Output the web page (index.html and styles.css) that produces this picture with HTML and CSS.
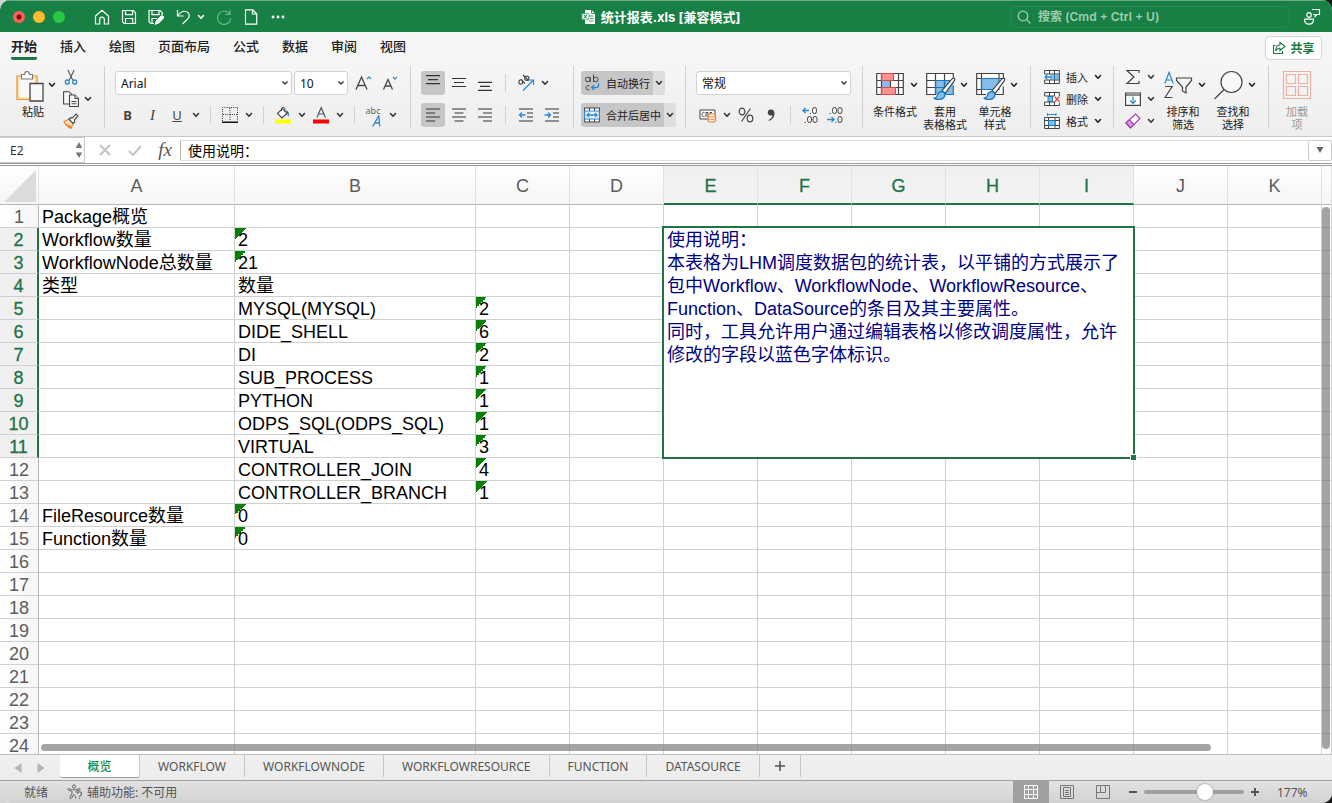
FILE: index.html
```html
<!DOCTYPE html>
<html lang="zh-CN">
<head>
<meta charset="utf-8">
<title>统计报表.xls</title>
<link rel="stylesheet" href="styles.css">
</head>
<body>
<svg class="defs" aria-hidden="true">
  <symbol id="chev" viewBox="0 0 8 8"><path d="M1.500 2.500 4 5.200 6.500 2.500" fill="none" stroke="currentColor" stroke-width="1.600" stroke-linecap="round" stroke-linejoin="round"/></symbol>
  <symbol id="brush" viewBox="0 0 30 30"><path d="M28.300 5.200c1 .8.2 2.300-.6 3.400L19 20.500l-3-2.800 9.500-11.300c1-.9 2-1.800 2.800-1.200Z" fill="#fff" stroke="#444" stroke-width="1.200"/><path d="M16 18.700c1.600.1 3 1.500 3 3-.4 2.800-2.500 4.800-6 4.800-1.600 0-3.600-.3-4.700-1.300 2.500-.5 2.600-1.500 3.200-3.300.6-1.900 2.300-3.300 4.500-3.200Z" fill="#83bdea" stroke="#1b75bc" stroke-width="1.200"/></symbol>
</svg>

<div class="window">
  <header class="titlebar">
    <div class="title-left">
      <div class="lights">
        <button class="light close" aria-label="关闭"></button>
        <button class="light minimize" aria-label="最小化"></button>
        <button class="light full" aria-label="全屏"></button>
      </div>
      <nav class="quick" aria-label="快速访问">
        <button aria-label="主页"><svg width="16" height="16" viewBox="0 0 16 16"><path d="M1.500 7 8 1.200 14.500 7v8h-4.200v-4.500a2.300 2.300 0 0 0-4.600 0V15H1.500Z"/></svg></button>
        <button aria-label="保存"><svg width="16" height="16" viewBox="0 0 16 16"><path d="M1.500 1.500h10.800l2.200 2.200v10.800H3.200l-1.700-1.700Zm3 0v4.200h7V1.500M4.500 14.500v-5h7.200v5"/></svg></button>
        <button aria-label="另存为"><svg width="16" height="16" viewBox="0 0 16 16"><path d="M6 14.500H2.700L1 12.800V1.500h11l2.200 2.200V6M4 1.500v4.200h7V1.500M4 14.500v-5h5"/><path d="m7.500 15 .8-3L13 7.300a1.400 1.400 0 0 1 2 2L10.500 14Z" fill="#fff"/></svg></button>
        <button class="undo" aria-label="撤消"><svg width="16" height="16" viewBox="0 0 16 16"><path d="M2.500 1v6h6M2.800 6.700C5 3.500 8.500 1.500 11.500 2.700c3.200 1.300 3.500 4.700 1.500 7L7.500 15"/></svg></button>
        <button class="narrow" aria-label="撤消选项"><svg width="8" height="8"><use href="#chev"/></svg></button>
        <button class="dim" aria-label="重做"><svg width="16" height="16" viewBox="0 0 16 16"><path d="M14 1v4.500H9.500M13.800 5.500A6.600 6.600 0 1 0 14.700 9"/></svg></button>
        <button aria-label="新建"><svg width="16" height="16" viewBox="0 0 16 16"><path d="M2.500.8h7.300l3.900 4v10.400H2.500ZM9.500 1v4h4"/></svg></button>
        <button aria-label="更多"><svg width="16" height="16" viewBox="0 0 16 16"><g fill="#fff" stroke="none"><circle cx="3" cy="8" r="1.400"/><circle cx="8" cy="8" r="1.400"/><circle cx="13" cy="8" r="1.400"/></g></svg></button>
      </nav>
    </div>
    <h1 class="doc-title"><svg width="16" height="16" viewBox="0 0 16 16"><path d="M4 1h6.500L14 4.500V15H4Z" fill="#fff"/><path d="M10.500 1v3.500H14M8 7h4.500M9 9.500h3.500M8 12h4.500" fill="none" stroke="#188045" stroke-width=".8"/><path d="M.8 4.500H8v6.200H.8Z" fill="#e6f3ea" stroke="#188045" stroke-width=".5"/><path d="m2.700 5.800 3.400 3.600M6.100 5.800 2.700 9.400" stroke="#188045"/></svg>统计报表.xls [兼容模式]</h1>
    <div class="title-right">
      <label class="search"><svg width="14" height="14" viewBox="0 0 14 14" fill="none" stroke="currentColor" stroke-width="1.300"><circle cx="6" cy="6" r="4.800"/><path d="m9.500 9.500 4 4"/></svg><input type="search" aria-label="搜索" placeholder="搜索 (Cmd + Ctrl + U)"></label>
      <button class="collab" aria-label="协作"><svg width="18" height="18" viewBox="0 0 18 18" fill="none" stroke="#fff" stroke-width="1.200"><path d="M9 1.500h7.500v5h-2.700L12.200 8.300V6.500H10"/><circle cx="6" cy="7" r="2.300"/><path d="M1.500 11.200h9c0 3-1.500 5-4.500 5s-4.500-2-4.500-5Z"/></svg></button>
    </div>
  </header>

  <div class="tabs-row">
    <nav class="tabs" aria-label="功能区">
      <a class="on" href="#">开始</a><a href="#">插入</a><a href="#">绘图</a><a href="#">页面布局</a><a href="#">公式</a><a href="#">数据</a><a href="#">审阅</a><a href="#">视图</a>
    </nav>
    <button class="share"><svg width="14" height="14" viewBox="0 0 14 14" fill="none" stroke="#1d7a45" stroke-width="1.100"><path d="M3.500 4.500H1.500v8h9V10M8 1.500l5 4-5 4V7.200C5.500 7 4.500 8.500 3.700 10 3.700 6.500 5 4 8 3.800Z"/></svg>共享</button>
  </div>

  <div class="ribbon">
    <section class="group clip">
      <button class="tall paste"><span class="tall-icon"><svg width="28" height="32" viewBox="0 0 28 32"><path d="M1 6h20v23.500H1Z" fill="#fde3a4" stroke="#e8913c" stroke-width="1.200"/><path d="M3.500 9h15v18h-15Z" fill="#f8f8f8"/><path d="M5.500 9V4.500h3C8.700 2.500 9.500 1.500 11 1.500s2.300 1 2.500 3h3V9Z" fill="#fff" stroke="#777" stroke-width="1.100"/><path d="M14 13.500h13V31H14Z" fill="#f8f8f8" stroke="#444" stroke-width="1.300"/></svg><svg class="ch" width="8" height="8"><use href="#chev"/></svg></span><span>粘贴</span></button>
      <div class="stack">
        <div class="line"><button class="ico" aria-label="剪切"><svg width="16" height="16" viewBox="0 0 16 16" fill="none"><path d="m4.800 1 5 10.200M11.200 1l-5 10.200" stroke="#555" stroke-width="1.100"/><circle cx="4.300" cy="13" r="2" stroke="#2b88d0" stroke-width="1.300"/><circle cx="11.700" cy="13" r="2" stroke="#2b88d0" stroke-width="1.300"/></svg></button></div>
        <div class="line"><button class="ico" aria-label="复制"><svg width="16" height="16" viewBox="0 0 16 16" fill="#f8f8f8" stroke="#444" stroke-width="1.100"><path d="M6 13H.6V.7H6l3 3"/><path d="M6.500 4H12l3.400 3.400v8.200H6.500Z"/><path d="M12 4v3.500h3.400M8.500 10.500h5M8.500 12.800h5"/></svg></button><button class="drop" aria-label="复制选项"><svg width="8" height="8"><use href="#chev"/></svg></button></div>
        <div class="line"><button class="ico" aria-label="格式刷"><svg width="16" height="16" viewBox="0 0 16 16"><path d="m1 8.500 5-2.300 4.200 4.200L8 15.300C4.800 14 2.500 12 1 8.500Z" fill="#fce0b8" stroke="#ea8a3a" stroke-width="1.300"/><path d="m2.500 10.500 6 2.500L8 15.300 4 13Z" fill="#ea8a3a"/><path d="m6 6.200 1.500-1.600 2 .3L13 1l2 2-3.600 3.800.3 2-1.500 1.600Z" fill="#fff" stroke="#444" stroke-width="1.100"/></svg></button></div>
      </div>
    </section>

    <section class="group two font-group">
      <div class="row"><select class="box font" aria-label="字体"><option>Arial</option></select><select class="box size" aria-label="字号"><option>10</option></select>
        <button class="ico wide" aria-label="增大字号"><svg width="18" height="18" viewBox="0 0 18 18" fill="none"><path d="M1 15.500 6.500 3 12 15.500M3 11.500h7" stroke="#444" stroke-width="1.300"/><path d="m12 5 2-2.200 2 2.200" stroke="#2b88d0" stroke-width="1.200"/></svg></button><button class="ico wide" aria-label="减小字号"><svg width="18" height="18" viewBox="0 0 18 18" fill="none"><path d="m1.500 15.500 4.500-10 4.500 10M3 12h6" stroke="#444" stroke-width="1.300"/><path d="m11 2.800 2 2.200 2-2.200" stroke="#2b88d0" stroke-width="1.200"/></svg></button></div>
      <div class="row"><button class="ico bi"><b>B</b></button><button class="ico bi"><i>I</i></button><button class="ico"><u>U</u></button><button class="drop" aria-label="下划线选项"><svg width="8" height="8"><use href="#chev"/></svg></button><span class="sep"></span>
        <button class="ico" aria-label="边框"><svg width="16" height="16" viewBox="0 0 16 16" fill="none" stroke="#333"><path d="M.5 14V.5h15V14M8 1v13M1 7.500h14" stroke-dasharray="1 1.200"/><path d="M0 15.300h16" stroke="#111" stroke-width="1.400"/></svg></button><button class="drop" aria-label="边框选项"><svg width="8" height="8"><use href="#chev"/></svg></button><span class="sep"></span>
        <button class="ico" aria-label="填充颜色"><svg width="16" height="18" viewBox="0 0 16 18"><path d="m2.500 7.500 5-5 4.500 5-5 4.500Z" fill="#fff" stroke="#444" stroke-width="1.100"/><path d="M6.500 5V2.500a1.700 1.700 0 0 1 3.300 0V6" fill="none" stroke="#444"/><path d="M11 4.500c3 .3 3.500 3.500 2.300 6.500l-1-3Z" fill="#1b6fb8"/><path d="M0 13.500h16v4H0Z" fill="#ff0"/></svg></button><button class="drop" aria-label="填充颜色选项"><svg width="8" height="8"><use href="#chev"/></svg></button>
        <button class="ico" aria-label="字体颜色"><svg width="16" height="18" viewBox="0 0 16 18"><path d="m4 11.500 4.200-10 4.200 10M5.500 8h5.500" fill="none" stroke="#555" stroke-width="1.200"/><path d="M0 13.500h16v4H0Z" fill="red"/></svg></button><button class="drop" aria-label="字体颜色选项"><svg width="8" height="8"><use href="#chev"/></svg></button><span class="sep"></span>
        <button class="ico" aria-label="拼音指南"><span class="abc">abc</span><svg width="10" height="12" viewBox="0 0 10 12"><path d="M.7 11.500 6.800.8l1 10.700M2.800 8h4.700" fill="none" stroke="#2b88d0" stroke-width="1.300"/></svg></button><button class="drop" aria-label="拼音选项"><svg width="8" height="8"><use href="#chev"/></svg></button></div>
    </section>

    <section class="group two">
      <div class="row gap"><button class="ico on" aria-label="顶端对齐"><svg width="16" height="16" viewBox="0 0 16 16" stroke="#333" stroke-width="1.200"><path d="M1 .6h14M3 4.600h10M1 8.600h14"/></svg></button><button class="ico" aria-label="垂直居中"><svg width="16" height="16" viewBox="0 0 16 16" stroke="#333" stroke-width="1.200"><path d="M1 3.500h14M3 7.500h10M1 11.500h14"/></svg></button><button class="ico" aria-label="底端对齐"><svg width="16" height="16" viewBox="0 0 16 16" stroke="#333" stroke-width="1.200"><path d="M1 7.400h14M3 11.400h10M1 15.400h14"/></svg></button><span class="sep"></span>
        <span class="pair"><button class="ico" aria-label="方向"><svg width="18" height="18" viewBox="0 0 18 18" fill="none"><g stroke="#444" stroke-width="1.100"><ellipse cx="3.800" cy="8" rx="1.900" ry="2.200"/><path d="m4 5.500 4 4"/><path d="m6 1 5.500 5.500"/><ellipse cx="9.800" cy="4.200" rx="2.100" ry="2.200"/></g><path d="M6 16.500 16 6.500M11.500 6H16.500v5" stroke="#2b88d0" stroke-width="1.200"/></svg></button><button class="drop" aria-label="方向选项"><svg width="8" height="8"><use href="#chev"/></svg></button></span></div>
      <div class="row gap"><button class="ico on" aria-label="左对齐"><svg width="16" height="16" viewBox="0 0 16 16" stroke="#333" stroke-width="1.200"><path d="M1 2h14M1 6h9M1 10h14M1 14h9"/></svg></button><button class="ico" aria-label="居中"><svg width="16" height="16" viewBox="0 0 16 16" stroke="#333" stroke-width="1.200"><path d="M1 2h14M3.500 6h9M1 10h14M3.500 14h9"/></svg></button><button class="ico" aria-label="右对齐"><svg width="16" height="16" viewBox="0 0 16 16" stroke="#333" stroke-width="1.200"><path d="M1 2h14M6 6h9M1 10h14M6 14h9"/></svg></button><span class="sep"></span>
        <button class="ico" aria-label="减少缩进"><svg width="16" height="16" viewBox="0 0 16 16" fill="none" stroke="#333" stroke-width="1.200"><path d="M1 2h14M9 6h6M9 10h6M1 14h14"/><path d="M7.500 8H1.500M4 5.500 1.500 8 4 10.500" stroke="#2b88d0" stroke-width="1.400"/></svg></button><button class="ico" aria-label="增加缩进"><svg width="16" height="16" viewBox="0 0 16 16" fill="none" stroke="#333" stroke-width="1.200"><path d="M1 2h14M9 6h6M9 10h6M1 14h14"/><path d="M.5 8h6M4 5.500 6.500 8 4 10.500" stroke="#2b88d0" stroke-width="1.400"/></svg></button></div>
    </section>

    <section class="group two wraps">
      <div class="row"><button class="toggle"><svg width="16" height="18" viewBox="0 0 16 18" fill="none" stroke="#444"><ellipse cx="3.800" cy="5.500" rx="2.300" ry="2.400"/><path d="M6.200 3v5M9.500.5V8"/><ellipse cx="11.800" cy="5.500" rx="2.300" ry="2.400"/><path d="M5.500 12a2.200 2.200 0 1 0 0 3.500"/><path d="M14.500 9v2.500a2 2 0 0 1-2 2H7.500M10 11l-2.500 2.500L10 16" stroke="#2b88d0" stroke-width="1.300"/></svg>自动换行</button><button class="toggle-drop" aria-label="换行选项"><svg width="8" height="8"><use href="#chev"/></svg></button></div>
      <div class="row"><button class="toggle"><svg width="16" height="16" viewBox="0 0 16 16" fill="#fff" stroke="#444"><path d="M.5 1h15v14H.5ZM5.500 1v3M10.500 1v3M5.500 12v3M10.500 12v3"/><path d="M.7 4h14.600v8H.7Z" fill="#e5f2fb" stroke="#2b88d0"/><path d="M3 8h10M5 6 3 8l2 2M11 6l2 2-2 2" fill="none" stroke="#2b88d0" stroke-width="1.300"/></svg>合并后居中</button><button class="toggle-drop" aria-label="合并选项"><svg width="8" height="8"><use href="#chev"/></svg></button></div>
    </section>

    <section class="group two number">
      <div class="row"><select class="box format" aria-label="数字格式"><option>常规</option></select></div>
      <div class="row"><button class="ico" aria-label="货币格式"><svg width="18" height="16" viewBox="0 0 18 16" fill="none"><path d="M1 3h15v9H1Z" fill="#fff" stroke="#444"/><path d="M5.500 5.500C4 4.800 3 6 3 7.500S4 10 5.500 9.500M7 10V5.500h2V10M11 9V5.500h2" stroke="#444"/><path d="M9 8.500v5c0 2 7.500 2 7.500 0v-5" fill="#fff" stroke="#ee8433" stroke-width="1.200"/><ellipse cx="12.750" cy="8.500" rx="3.750" ry="1.500" fill="#fff" stroke="#ee8433" stroke-width="1.200"/><path d="M9 11c0 2 7.500 2 7.500 0" stroke="#ee8433"/></svg></button><button class="drop" aria-label="货币选项"><svg width="8" height="8"><use href="#chev"/></svg></button>
        <button class="ico" aria-label="百分比"><svg width="16" height="16" viewBox="0 0 16 16" fill="none" stroke="#444" stroke-width="1.200"><ellipse cx="4" cy="4.500" rx="2.800" ry="3.300"/><ellipse cx="12" cy="11.500" rx="2.800" ry="3.300"/><path d="M12.500 1.500 3.500 14.500"/></svg></button><button class="ico bi" aria-label="千位分隔"><svg width="10" height="14" viewBox="0 0 10 14"><path d="M5 1.500a3 3 0 0 0-.5 6c.8.200 1.500 0 2-.3C6.300 9.500 4.500 11.200 2.500 12l.5 1C6.500 11.800 8.500 9 8.500 5.500 8.500 3 7 1.500 5 1.500Z" fill="#444"/></svg></button><span class="sep"></span>
        <button class="ico" aria-label="增加小数位"><svg width="18" height="18" viewBox="0 0 18 18" fill="none" stroke="#444"><path d="M8 4.500H2M4.500 2 2 4.500 4.500 7" stroke="#2b88d0" stroke-width="1.400"/><rect x="11.500" y="1.500" width="4" height="6" rx="2"/><rect x="6.500" y="10.500" width="4" height="6" rx="2"/><rect x="12" y="10.500" width="4" height="6" rx="2"/><path d="M3.500 16.500h1.200M9 7.500h1"/></svg></button><button class="ico bi" aria-label="减少小数位"><svg width="18" height="18" viewBox="0 0 18 18" fill="none" stroke="#444"><path d="M1 13.500h7M5.500 11 8 13.500 5.500 16" stroke="#2b88d0" stroke-width="1.400"/><rect x="6.500" y="1.500" width="4" height="6" rx="2"/><rect x="12" y="1.500" width="4" height="6" rx="2"/><rect x="12" y="10.500" width="4" height="6" rx="2"/><path d="M3.500 7.500h1.200M9.500 16.500h1"/></svg></button></div>
    </section>

    <section class="group tiles">
      <button class="tall"><span class="tall-icon"><svg width="30" height="30" viewBox="0 0 30 30" fill="none"><path d="M.7 3.500h26.600v21H.7Z" fill="#fff"/><path d="M5.500 3.500h12v7h-12ZM5.500 17.500h14v7h-14Z" fill="#ff9191"/><path d="M5.500 10.500h9v7h-9Z" fill="#83bdea"/><path d="M.7 3.500h26.600v21H.7ZM.7 10.500h26.600M.7 17.500h26.600M22.500 3.500v21M14.500 10.500v7M5.500 3.500v21" stroke="#444" stroke-width="1.200"/><path d="M17.500 10.500h-12v-7h12v7M5.500 17.500h14v7h-14Z" stroke="#e2474b" stroke-width="1.200"/></svg><svg class="ch" width="8" height="8"><use href="#chev"/></svg></span><span>条件格式</span></button>
      <button class="tall"><span class="tall-icon"><svg width="30" height="30" viewBox="0 0 30 30" fill="none"><path d="M.7 3.500h26.600v21H.7Z" fill="#fff"/><path d="M9.500 10.500h17.800v14H9.500Z" fill="#83bdea"/><path d="M27.300 9V3.500H.7v21H10M.7 10.500h26.600M.7 17.500H19M9.500 3.500v21M18.500 3.500v14" stroke="#444" stroke-width="1.200"/><path d="M9.500 24.500v-14h17M9.500 17.500H18M18.500 10.500v7M19 24.500h8.300v-9" stroke="#1b75bc" stroke-width="1.200"/><use href="#brush" width="30" height="30" y="3"/></svg><svg class="ch" width="8" height="8"><use href="#chev"/></svg></span><span>套用<br>表格格式</span></button>
      <button class="tall"><span class="tall-icon"><svg width="30" height="30" viewBox="0 0 30 30" fill="none"><path d="M.7 3.500h26.600v21H.7Z" fill="#fff"/><path d="M27.300 9V3.500H.7v21H10M.7 8.500h26.600M.7 19.500H10M5.500 3.500v21M23 3.500v5M19 24.500h8.300v-8" stroke="#444" stroke-width="1.200"/><path d="M5.500 8.500H23v11H5.500Z" fill="#83bdea" stroke="#1b75bc" stroke-width="1.200"/><use href="#brush" width="30" height="30" y="3"/></svg><svg class="ch" width="8" height="8"><use href="#chev"/></svg></span><span>单元格<br>样式</span></button>
    </section>

    <section class="group cells">
      <div class="stack">
        <button class="line"><svg width="16" height="16" viewBox="0 0 16 16" fill="none"><path d="M.6 1.500h14.800v13H.6Z" fill="#fff"/><path d="M6 5.500h9.400v5H6Z" fill="#83bdea"/><path d="M.6 5V1.500h14.800v13H.6V11M.6 5h14.800M.6 11h14.800M5.500 1.500V5M10.500 1.500V5M5.500 11v3.500M10.500 11v3.500" stroke="#444"/><path d="M10.500 5.500v5" stroke="#1b75bc"/><path d="M7.500 8H1M3.500 5.500 1 8l2.500 2.500" stroke="#2b88d0" stroke-width="1.300"/></svg><span>插入</span><svg class="ch" width="8" height="8"><use href="#chev"/></svg></button>
        <button class="line"><svg width="16" height="16" viewBox="0 0 16 16" fill="none"><path d="M.6 1.500h14.800v13H.6Z" fill="#fff"/><path d="M.6 5V1.500h14.800V5M.6 11v3.500h14.800V12M.6 5H10M.6 11H10M5.500 1.500V5M10.500 1.500V5M5.500 11v3.500M10.500 11v3.500" stroke="#444"/><path d="M4 5.500h4.500v5H4Z" fill="#83bdea" stroke="#1b75bc"/><path d="m10.500 5.500 5 5.500M15.500 5.500l-5 5.500" stroke="#e2474b" stroke-width="1.300"/></svg><span>删除</span><svg class="ch" width="8" height="8"><use href="#chev"/></svg></button>
        <button class="line"><svg width="16" height="16" viewBox="0 0 16 16" fill="none"><path d="M.6 4.500h14.800v11H.6Z" fill="#fff" stroke="#444"/><path d="M.6 7.500h14.800M.6 12.500h14.800M4.500 4.500v11M11 4.500v11" stroke="#444"/><path d="M4.500 7.500H11v5H4.500Z" fill="#83bdea" stroke="#1b75bc"/><path d="M3.500 1.500H12M3.500 0v3M12 0v3" stroke="#2b88d0"/></svg><span>格式</span><svg class="ch" width="8" height="8"><use href="#chev"/></svg></button>
      </div>
    </section>

    <section class="group edit">
      <div class="stack">
        <div class="line"><button class="ico" aria-label="自动求和"><svg width="16" height="16" viewBox="0 0 16 16" fill="none"><path d="M14 4V1.500H2L9 8l-7 6.500h12V12" stroke="#444" stroke-width="1.200"/></svg></button><button class="drop" aria-label="求和选项"><svg width="8" height="8"><use href="#chev"/></svg></button></div>
        <div class="line"><button class="ico" aria-label="填充"><svg width="16" height="16" viewBox="0 0 16 16" fill="none"><path d="M.6 2h14.800v12.400H.6Z" fill="#fff" stroke="#444" stroke-width="1.200"/><path d="M.6 4h14.800" stroke="#444" stroke-width="1.200"/><path d="M8 5.500v7M5 9.500l3 3 3-3" stroke="#2b88d0" stroke-width="1.200"/></svg></button><button class="drop" aria-label="填充选项"><svg width="8" height="8"><use href="#chev"/></svg></button></div>
        <div class="line"><button class="ico" aria-label="清除"><svg width="16" height="16" viewBox="0 0 16 16"><path d="m1 10 9.500-9L15 5.500 5.500 15Z" fill="#fff" stroke="#a33fb0" stroke-width="1.200"/><path d="m1 10 3.300-3.200L9 11.500 5.500 15Z" fill="#d698dc" stroke="#a33fb0" stroke-width="1.200"/></svg></button><button class="drop" aria-label="清除选项"><svg width="8" height="8"><use href="#chev"/></svg></button></div>
      </div>
      <button class="tall"><span class="tall-icon"><svg width="30" height="30" viewBox="0 0 30 30" fill="none"><path d="M.8 13.500 5 2.500l4.200 11M2.300 10h5.400" stroke="#2b88d0" stroke-width="1.200"/><path d="M1.200 16.500h7L1 27.500h7.500M12.500 8h15v2.500L22 17v6l-3.500-2v-4l-6-6.500Z" stroke="#444" stroke-width="1.200"/></svg><svg class="ch" width="8" height="8"><use href="#chev"/></svg></span><span>排序和<br>筛选</span></button>
      <button class="tall"><span class="tall-icon"><svg width="30" height="30" viewBox="0 0 30 30" fill="#f8f8f8" stroke="#444" stroke-width="1.200"><circle cx="17.500" cy="12" r="10.500"/><path d="M10 19.500.5 29"/></svg><svg class="ch" width="8" height="8"><use href="#chev"/></svg></span><span>查找和<br>选择</span></button>
    </section>

    <section class="group last">
      <button class="tall addin" disabled><span class="tall-icon"><svg width="30" height="30" viewBox="0 0 30 30" fill="none" stroke="#eeb09f" stroke-width="1.200"><path d="M1.500 1.500h27v27h-27ZM4.500 4.500h9v9h-9ZM16.500 4.500h9v9h-9ZM4.500 16.500h9v9h-9ZM16.500 16.500h9v9h-9Z"/></svg></span><span>加载<br>项</span></button>
    </section>
  </div>

  <div class="formula-row">
    <div class="namebox"><input type="text" value="E2" aria-label="名称框"><svg width="8" height="18" viewBox="0 0 8 18" fill="#777"><path d="m4 1 3.300 6H.7ZM4 17 .7 11.500h6.600Z"/></svg></div>
    <div class="fx">
      <button aria-label="取消"><svg width="14" height="14" viewBox="0 0 14 14" stroke="#c4c4c4" stroke-width="2"><path d="m2 2 10 10M12 2 2 12"/></svg></button>
      <button aria-label="输入"><svg width="14" height="14" viewBox="0 0 14 14" fill="none" stroke="#c4c4c4" stroke-width="2"><path d="m1 8 4 4 8-9"/></svg></button>
      <button class="fn" aria-label="插入函数"><i>fx</i></button>
    </div>
    <input class="formula" type="text" value="使用说明：" aria-label="编辑栏">
    <button class="expand" aria-label="展开编辑栏"><svg width="8" height="8" viewBox="0 0 8 8"><path d="M.5 1h7L4 7Z" fill="#666"/></svg></button>
  </div>

  <main class="sheet">
    <table class="cells-table">
      <colgroup><col class="c-row"><col class="c-a"><col class="c-b"><col class="c"><col class="c"><col class="c"><col class="c"><col class="c"><col class="c"><col class="c"><col class="c"><col class="c"><col></colgroup>
      <thead><tr><th class="corner"><svg width="32" height="32" viewBox="0 0 32 32"><path d="M32 0v32H0Z" fill="#dcdcdc"/></svg></th><th>A</th><th>B</th><th>C</th><th>D</th><th class="sel">E</th><th class="sel">F</th><th class="sel">G</th><th class="sel">H</th><th class="sel">I</th><th>J</th><th>K</th><th></th></tr></thead>
      <tbody>
      <tr><th>1</th><td>Package概览</td><td></td><td></td><td></td><td></td><td></td><td></td><td></td><td></td><td></td><td></td><td></td></tr>
      <tr><th class="sel">2</th><td>Workflow数量</td><td class="flag">2</td><td></td><td></td><td class="merged" colspan="5" rowspan="10">使用说明：<br>本表格为LHM调度数据包的统计表，以平铺的方式展示了包中Workflow、WorkflowNode、WorkflowResource、Function、DataSource的条目及其主要属性。<br>同时，工具允许用户通过编辑表格以修改调度属性，允许修改的字段以蓝色字体标识。<span class="handle"></span></td><td></td><td></td><td></td></tr>
      <tr><th class="sel">3</th><td>WorkflowNode总数量</td><td class="flag">21</td><td></td><td></td><td></td><td></td><td></td></tr>
      <tr><th class="sel">4</th><td>类型</td><td>数量</td><td></td><td></td><td></td><td></td><td></td></tr>
      <tr><th class="sel">5</th><td></td><td>MYSQL(MYSQL)</td><td class="flag">2</td><td></td><td></td><td></td><td></td></tr>
      <tr><th class="sel">6</th><td></td><td>DIDE_SHELL</td><td class="flag">6</td><td></td><td></td><td></td><td></td></tr>
      <tr><th class="sel">7</th><td></td><td>DI</td><td class="flag">2</td><td></td><td></td><td></td><td></td></tr>
      <tr><th class="sel">8</th><td></td><td>SUB_PROCESS</td><td class="flag">1</td><td></td><td></td><td></td><td></td></tr>
      <tr><th class="sel">9</th><td></td><td>PYTHON</td><td class="flag">1</td><td></td><td></td><td></td><td></td></tr>
      <tr><th class="sel">10</th><td></td><td>ODPS_SQL(ODPS_SQL)</td><td class="flag">1</td><td></td><td></td><td></td><td></td></tr>
      <tr><th class="sel">11</th><td></td><td>VIRTUAL</td><td class="flag">3</td><td></td><td></td><td></td><td></td></tr>
      <tr><th>12</th><td></td><td>CONTROLLER_JOIN</td><td class="flag">4</td><td></td><td></td><td></td><td></td><td></td><td></td><td></td><td></td><td></td></tr>
      <tr><th>13</th><td></td><td>CONTROLLER_BRANCH</td><td class="flag">1</td><td></td><td></td><td></td><td></td><td></td><td></td><td></td><td></td><td></td></tr>
      <tr><th>14</th><td>FileResource数量</td><td class="flag">0</td><td></td><td></td><td></td><td></td><td></td><td></td><td></td><td></td><td></td><td></td></tr>
      <tr><th>15</th><td>Function数量</td><td class="flag">0</td><td></td><td></td><td></td><td></td><td></td><td></td><td></td><td></td><td></td><td></td></tr>
      <tr><th>16</th><td></td><td></td><td></td><td></td><td></td><td></td><td></td><td></td><td></td><td></td><td></td><td></td></tr>
      <tr><th>17</th><td></td><td></td><td></td><td></td><td></td><td></td><td></td><td></td><td></td><td></td><td></td><td></td></tr>
      <tr><th>18</th><td></td><td></td><td></td><td></td><td></td><td></td><td></td><td></td><td></td><td></td><td></td><td></td></tr>
      <tr><th>19</th><td></td><td></td><td></td><td></td><td></td><td></td><td></td><td></td><td></td><td></td><td></td><td></td></tr>
      <tr><th>20</th><td></td><td></td><td></td><td></td><td></td><td></td><td></td><td></td><td></td><td></td><td></td><td></td></tr>
      <tr><th>21</th><td></td><td></td><td></td><td></td><td></td><td></td><td></td><td></td><td></td><td></td><td></td><td></td></tr>
      <tr><th>22</th><td></td><td></td><td></td><td></td><td></td><td></td><td></td><td></td><td></td><td></td><td></td><td></td></tr>
      <tr><th>23</th><td></td><td></td><td></td><td></td><td></td><td></td><td></td><td></td><td></td><td></td><td></td><td></td></tr>
      <tr><th>24</th><td></td><td></td><td></td><td></td><td></td><td></td><td></td><td></td><td></td><td></td><td></td><td></td></tr>
      </tbody>
    </table>
    <div class="scroll-v"></div>
    <div class="scroll-h"></div>
  </main>

  <nav class="sheets" aria-label="工作表">
    <div class="arrows"><button aria-label="上一张"><svg width="8" height="12" viewBox="0 0 8 12"><path d="M7.500 1v10L.5 6Z" fill="#b4b4b4"/></svg></button><button aria-label="下一张"><svg width="8" height="12" viewBox="0 0 8 12"><path d="M.5 1v10l7-5Z" fill="#b4b4b4"/></svg></button></div>
    <button class="sheet-tab on">概览</button><button class="sheet-tab">WORKFLOW</button><button class="sheet-tab">WORKFLOWNODE</button><button class="sheet-tab">WORKFLOWRESOURCE</button><button class="sheet-tab">FUNCTION</button><button class="sheet-tab">DATASOURCE</button><button class="sheet-tab add" aria-label="新建工作表"><svg width="12" height="12" viewBox="0 0 12 12" stroke="#555" stroke-width="1.600"><path d="M6 1v10M1 6h10"/></svg></button>
  </nav>

  <footer class="status">
    <span>就绪</span>
    <span class="a11y"><svg width="16" height="16" viewBox="0 0 16 16" fill="none" stroke="#666"><circle cx="7" cy="2.500" r="1.600"/><path d="M1.500 4.500C3.500 5.500 5 5.800 7 5.800s3.500-.3 5.500-1.300c1 0 1 1.200.3 1.500L9 7.300v1.500M1.500 4.500c-1 .2-.8 1.300 0 1.600L5 7.300v2L3 13.500c-.2 1.200 1 1.500 1.500.7L7 10M8 11.500l.8 3"/><path d="M10.500 9.800a2 2 0 1 1 3 1.700c-.7.4-1 .8-1 1.500M12.500 14v1" stroke-width="1.200"/></svg>辅助功能: 不可用</span>
    <div class="views">
      <button class="on" aria-label="普通"><svg width="14" height="14" viewBox="0 0 14 14" fill="none" stroke="#fff"><path d="M.5.500h13v13H.5ZM4.500.500v13M9.500.500v13M.5 4.500h13M.5 9.500h13"/></svg></button>
      <button aria-label="页面布局"><svg width="14" height="14" viewBox="0 0 14 14" fill="none" stroke="#777"><path d="M.5.500h13v13H.5ZM3.500 2.500h7v9h-7ZM5 5.500h4M5 7.500h4M5 9.500h4"/></svg></button>
      <button aria-label="分页预览"><svg width="14" height="14" viewBox="0 0 14 14" fill="none" stroke="#777"><path d="M.5.500h13v13H.5ZM4.500.500v7M9.500.500v7H.5"/></svg></button>
    </div>
    <div class="zoom"><button aria-label="缩小"><svg width="8" height="8" viewBox="0 0 8 8"><path d="M0 4h8" stroke="#555" stroke-width="2"/></svg></button><input type="range" min="0" max="100" value="63" aria-label="缩放"><button aria-label="放大"><svg width="8" height="8" viewBox="0 0 8 8"><path d="M0 4h8M4 0v8" stroke="#555" stroke-width="2"/></svg></button></div>
    <span class="percent">177%</span>
  </footer>
</div>
</body>
</html>
```
FILE: styles.css
```css
* { box-sizing: border-box; }
html { background: linear-gradient(to right, #d5d5d5, #1a1a1a); }
body { margin: 0; font-family: "Noto Sans", "Noto Sans CJK SC", sans-serif; font-size: 12px; color: #333; }
button, input, select { font: inherit; color: inherit; border: 0; background: none; padding: 0; margin: 0; }
button { display: flex; align-items: center; justify-content: center; }
svg { display: block; flex: none; }
.defs { width: 0; height: 0; position: absolute; }
.window { height: 100vh; display: flex; flex-direction: column; overflow: hidden; border-radius: 10px; background: #f3f3f3; }
.window > * { flex: none; }

/* title bar */
.titlebar { height: 32px; display: flex; align-items: center; background: #188045; color: #fff; border-top: 1px solid #6fa886; }
.title-left, .title-right { flex: 1; display: flex; align-items: center; }
.lights { display: flex; gap: 8px; padding: 0 29px 0 13px; }
.light { width: 12px; height: 12px; border-radius: 50%; }
.close { background: radial-gradient(circle, #7a0c06 0 2px, #ff5f57 3px); }
.minimize { background: #febc2e; }
.full { background: #28c840; }
.quick { display: flex; align-items: center; gap: 11px; }
.quick svg { fill: none; stroke: #fff; stroke-width: 1.2; }
.quick .narrow { width: 8px; }
.quick .undo { margin-right: -5px; }
.dim { opacity: .4; }
.doc-title { margin: 0; display: flex; align-items: center; gap: 4px; font: bold 13px/20px Inter, "Noto Sans CJK SC", sans-serif; }
.title-right { justify-content: flex-end; gap: 13px; padding-right: 11px; }
.search { width: 280px; height: 22px; display: flex; align-items: center; gap: 7px; padding: 0 6px; border: 1px solid #2a8a54; border-radius: 6px; color: #a3ccb3; }
.search input { flex: 1; min-width: 0; outline: 0; font: 600 12px/20px Inter, "Noto Sans CJK SC", sans-serif; }
.search input::placeholder { color: #a3ccb3; }

/* ribbon tabs */
.tabs-row { height: 34px; display: flex; align-items: center; justify-content: space-between; padding: 0 10px 2px 11px; background: #f5f5f5; }
.tabs { display: flex; gap: 23px; align-self: stretch; }
.tabs a { font-size: 13px; font-weight: 500; line-height: 24px; color: #222; text-decoration: none; padding-top: 2px; height: 28px; }
.tabs .on { font-weight: 700; border-bottom: 3px solid #217346; border-radius: 2px; }
.share { width: 57px; height: 24px; gap: 4px; background: #fff; border: 1px solid #d4d4d4; border-radius: 4px; color: #1d7a45; font-weight: 700; }

/* ribbon */
.ribbon { height: 71px; display: flex; align-items: flex-start; background: linear-gradient(#f5f5f5, #eee); border-bottom: 1px solid #c8c8c8; }
.group { height: 62px; flex: none; display: flex; border-right: 1px solid #d0d0d0; }
.group.last { border: 0; }
.clip { width: 105px; padding-left: 10px; }
.clip .stack { padding-left: 3px; }
.two { flex-direction: column; gap: 8px; padding: 5px 9px 0 10px; }
.font-group { padding-right: 6px; }
.row { display: flex; align-items: center; height: 24px; }
.row.gap { gap: 2px; }
.wraps { width: 112px; padding: 5px 0 0 7px; }
.number { width: 177px; }
.stack { display: flex; flex-direction: column; }
.line { height: 22px; flex: none; display: flex; align-items: center; justify-content: flex-start; }
.ico { width: 24px; height: 24px; }
.ico.bi { width: 25px; }
.ico.wide { width: 27px; }
.ico.on { background: #c6c6c6; border-radius: 3px; }
.ico b, .ico i, .ico u { font-size: 13px; line-height: 20px; color: #444; }
.ico i { font-family: "Liberation Serif", serif; font-size: 15px; }
.drop { width: 14px; height: 24px; color: #333; }
.clip .drop { width: 9px; }
.sep { width: 15px; height: 18px; background: linear-gradient(#d0d0d0, #d0d0d0) center / 1px 100% no-repeat; }
.gap .sep { width: 13px; }
.pair { display: flex; }
.abc { font-size: 9px; line-height: 10px; align-self: flex-start; margin-right: -8px; color: #666; padding-top: 3px; }
.abc + svg { align-self: flex-end; }
.box { height: 24px; border: 1px solid #d2d2d2; border-radius: 3px; padding: 0 5px; color: #111; appearance: none; background: #fff url("data:image/svg+xml,%3Csvg xmlns='http://www.w3.org/2000/svg' width='8' height='8'%3E%3Cpath d='M1.500 2.500 4 5 6.500 2.500' fill='none' stroke='%23333' stroke-width='1.400'/%3E%3C/svg%3E") right 2px center no-repeat; }
.font { width: 177px; margin-right: 2px; }
.size { width: 54px; margin-right: 2px; }
.format { width: 155px; }
.toggle { height: 24px; padding: 0 3px; gap: 6px; background: #c6c6c6; border-radius: 3px 0 0 3px; font-size: 11px; color: #222; }
.toggle-drop { width: 12px; height: 24px; background: #dedede; border-radius: 0 3px 3px 0; }
.tiles { width: 168px; padding-left: 7px; }
.tall { width: 50px; flex-direction: column; justify-content: flex-start; font-size: 11px; line-height: 13px; padding-top: 4px; color: #222; white-space: nowrap; }
.tall-icon { width: 50px; height: 35px; padding-left: 6px; flex: none; display: flex; align-items: flex-start; gap: 4px; }
.tall-icon .ch { margin-top: 11px; }
.paste { width: 46px; }
.paste .tall-icon { width: 46px; }
.cells { width: 83px; padding-left: 13px; }
.cells .line { font-size: 11px; gap: 6px; color: #222; }
.edit { width: 155px; padding-left: 8px; }
.edit .stack { width: 36px; }
.addin { width: 56px; color: #999; }
.addin .tall-icon { width: 56px; padding-left: 13px; }

/* formula bar */
.formula-row { height: 29px; display: flex; align-items: center; background: #fff; border-bottom: 3px double #999; }
.namebox { width: 85px; height: 26px; display: flex; align-items: center; justify-content: space-between; border: 1px solid #c8c8c8; border-left: 0; padding: 0 1px 0 10px; }
.namebox input { width: 60px; }
.fx { display: flex; align-items: center; gap: 4px; padding: 0 2px 0 7px; }
.fx button { width: 26px; height: 24px; }
.fn i { font: italic 19px/20px "Liberation Serif", serif; color: #555; }
.formula { flex: 1; min-width: 0; height: 21px; border: solid #e0e0e0; border-width: 1px 0 1px 1px; border-left-color: #bbb; padding-left: 7px; font: 14px/18px "Liberation Sans", "Noto Sans CJK SC", sans-serif; color: #000; }
.expand { width: 24px; height: 21px; border: 1px solid #ccc; border-radius: 2px; }

/* grid */
.window > .sheet { flex: 1 1 0; min-height: 0; position: relative; overflow: hidden; background: #fff; }
.cells-table { width: 100%; table-layout: fixed; border-collapse: separate; border-spacing: 0; font: 18px/20px "Liberation Sans", "Noto Sans CJK SC", sans-serif; color: #000; }
.c-row { width: 39px; }
.c-a { width: 196px; }
.c-b { width: 241px; }
.c { width: 94px; }
td, th { height: 23px; padding: 2px 0 0; border: solid #d0d0d0; border-width: 0 1px 1px 0; white-space: nowrap; }
td { padding: 2px 3px 0; }
th { font-weight: 400; color: #5c5c5c; }
thead th { height: 39px; background: linear-gradient(#fff, #f5f5f5); border-right-color: #e2e2e2; border-bottom-color: #b8b8b8; }
thead .sel { background: linear-gradient(#f0f0f0, #f3f3f3); color: #217346; border-bottom: 2px solid #217346; -webkit-text-stroke: 0.3px #217346; }
tbody th { background: linear-gradient(to right, #fff, #f5f5f5); border-right-color: #b8b8b8; }
tbody .sel { background: #f0f0f0; color: #217346; border-right: 2px solid #217346; -webkit-text-stroke: 0.3px #217346; }
.corner svg { margin-left: 4px; }
.flag { background: linear-gradient(135deg, #078007 50%, transparent 50%) 0 0 / 11px 11px no-repeat; }
.merged { position: relative; vertical-align: top; padding-top: 1px; white-space: normal; line-height: 23px; color: #000080; }
.merged::after { content: ""; position: absolute; inset: -2px; border: 2px solid #217346; }
.handle { position: absolute; z-index: 1; right: -4px; bottom: -4px; width: 7px; height: 7px; background: #217346; border: 1px solid #fff; }
.scroll-v, .scroll-h { position: absolute; border-radius: 4px; background: rgba(120, 120, 120, .67); }
.scroll-v { right: 2px; top: 41px; bottom: 5px; width: 8px; }
.scroll-h { left: 41px; right: 121px; bottom: 3px; height: 7px; }

/* sheet tabs */
.sheets { height: 27px; display: flex; align-items: flex-start; background: linear-gradient(#f0f0f0, #ececec); border-top: 1px solid #c0c0c0; border-bottom: 1px solid #a0a0a0; }
.arrows { width: 60px; height: 26px; display: flex; align-items: center; gap: 15px; padding-left: 14px; }
.sheet-tab { height: 22px; padding: 0 18px; border-right: 1px solid #c8c8c8; color: #555; }
.sheet-tab.on { width: 80px; height: 23px; background: #fff; color: #1d8a4b; font-weight: 500; border-bottom: 1px solid #999; border-radius: 0 0 3px 3px; }
.sheet-tab.add { padding: 0 14px; }

/* status bar */
.status { height: 22px; display: flex; align-items: center; padding: 0 24px; background: linear-gradient(#e2e2e2, #d2d2d2); color: #555; }
.a11y { display: flex; align-items: center; gap: 4px; padding-left: 19px; }
.views { display: flex; align-self: stretch; margin-left: auto; }
.views button { width: 36px; }
.views .on { background: #a0a0a0; }
.zoom { display: flex; align-items: center; gap: 7px; padding: 0 18px 0 8px; }
.zoom input { appearance: none; width: 100px; height: 16px; }
.zoom input::-webkit-slider-runnable-track { height: 4px; border-radius: 2px; background: #a0a0a0; }
.zoom input::-webkit-slider-thumb { appearance: none; width: 16px; height: 16px; margin-top: -6px; border-radius: 50%; background: #fff; box-shadow: 0 0 2px #777; }
.percent { width: 31px; }
```
